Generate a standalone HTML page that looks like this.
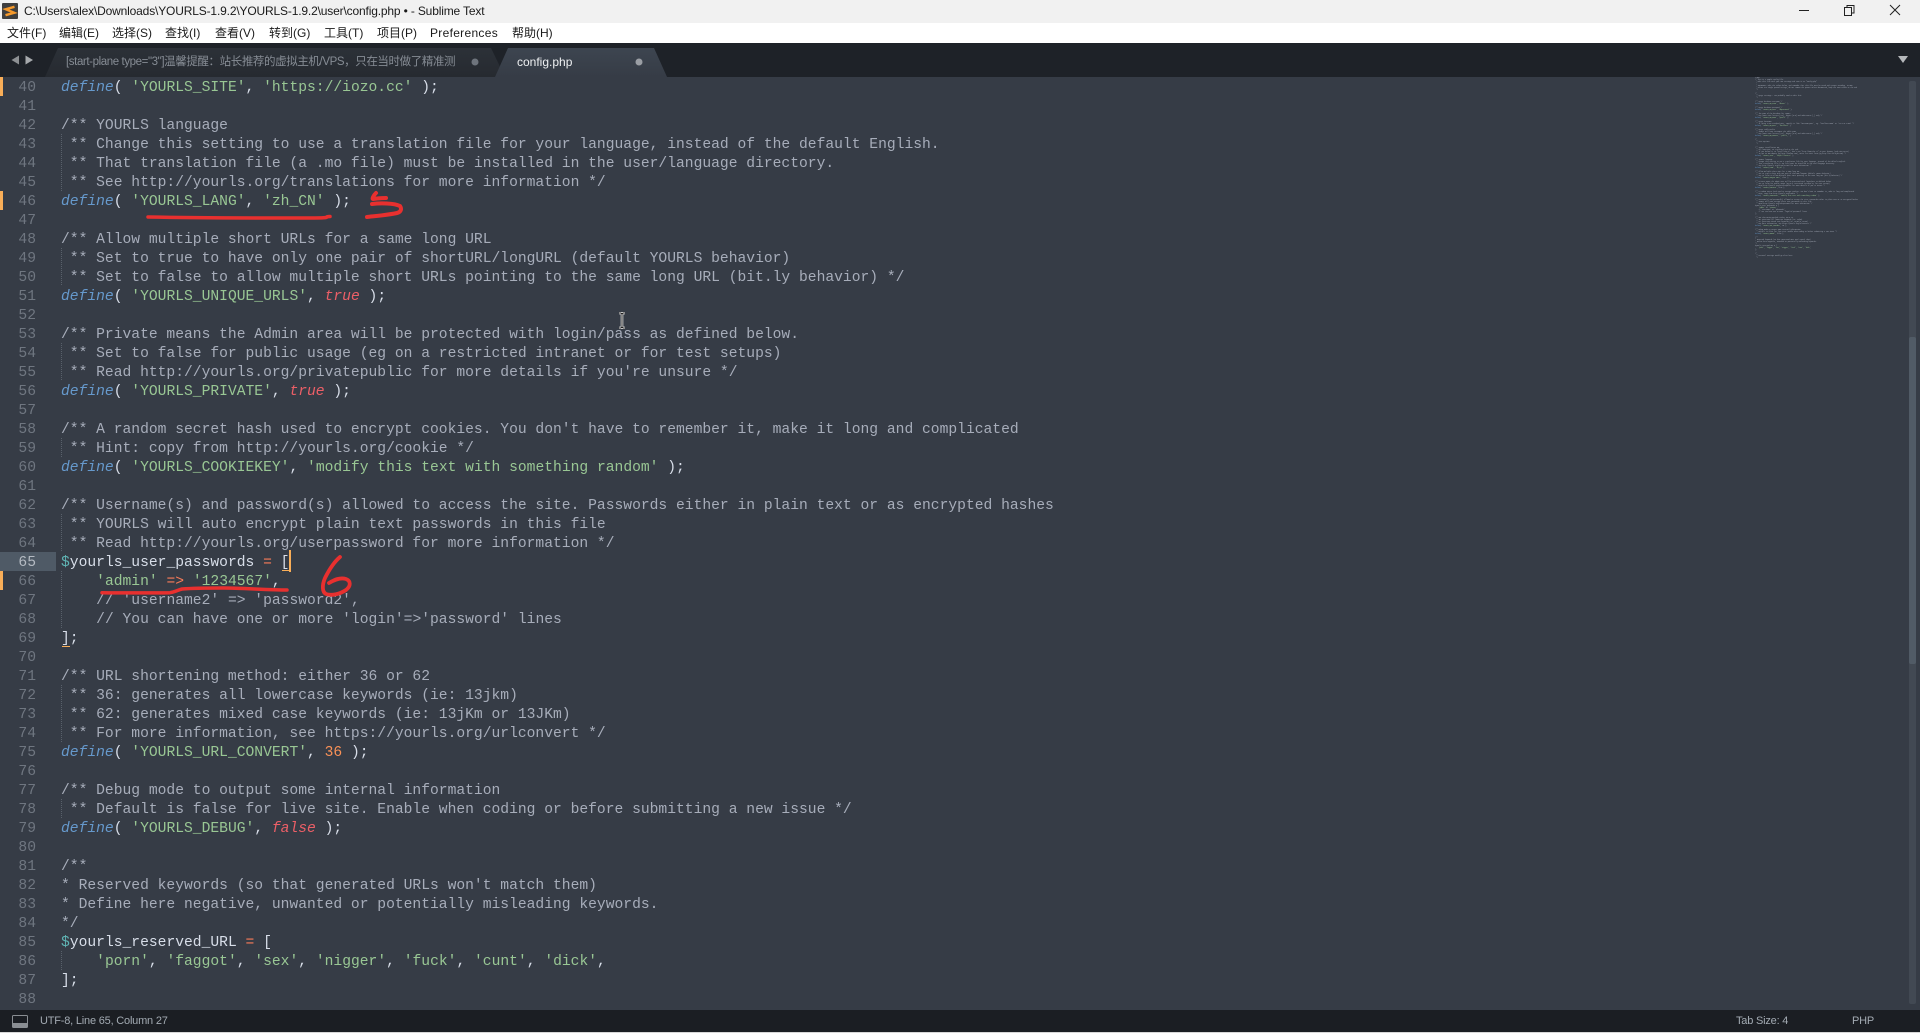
<!DOCTYPE html>
<html lang="en"><head><meta charset="utf-8"><title>config.php - Sublime Text</title>
<style>
html,body{margin:0;padding:0;width:1920px;height:1033px;overflow:hidden;background:#363c46}
body{position:relative;font-family:"Liberation Sans","Noto Sans CJK SC",sans-serif}
.abs,.m{position:absolute}
#title{left:0;top:0;width:1920px;height:23px;background:#f1f1f1}
#ttext{left:24px;top:4px;font-size:12px;line-height:15px;color:#1a1a1a;white-space:nowrap;letter-spacing:-.16px}
#menu{left:0;top:23px;width:1920px;height:20px;background:#fff}
.m{top:25px;font-size:12px;line-height:16px;color:#1a1a1a;white-space:nowrap}
#tabs{left:0;top:43px;width:1920px;height:34px;background:#1e2228}
#editor{left:0;top:77px;width:1920px;height:933px;background:#363c46;overflow:hidden}
#nums,#code{position:absolute;top:2px;font-family:"Liberation Mono",monospace;font-size:14.65px;line-height:19px;white-space:pre;margin:0}
#nums{left:0;width:36px;text-align:right;color:#6f7680}
#code{left:61px;color:#d8dee9}
#code i{color:#6699cc;font-style:italic}
#code i.t{color:#ec5f67}
#code b{font-weight:normal;color:#99c794}
#code u{text-decoration:none;color:#a7adba}
#code em{font-style:normal;color:#f99157}
#code s{text-decoration:none;color:#f97b58}
#code span{color:#5fb4b4}
.g{position:absolute;left:61px;width:1px;background:repeating-linear-gradient(#59616b 0 1px,transparent 1px 2px)}
.mk{position:absolute;left:0;width:3px;height:19px;background:#f9ae58}
#mini{position:absolute;left:1755px;top:1px;margin:0;font-family:"Liberation Mono",monospace;font-size:1.53px;line-height:2px;white-space:pre;color:#a7adba}
#mini i{color:#6699cc;font-style:normal}#mini b{color:#99c794;font-weight:normal}
#status{left:0;top:1010px;width:1920px;height:22px;background:#1b1e23}
#bottom{left:0;top:1032px;width:1920px;height:1px;background:#d8d8d8}
.st{position:absolute;top:3px;font-size:11px;line-height:16px;letter-spacing:-.2px;color:#a3abb3;white-space:nowrap}
</style></head><body>
<div class="abs" id="title"></div>
<svg class="abs" style="left:2px;top:3px" width="16" height="16" viewBox="0 0 16 16"><rect width="16" height="16" rx="1" fill="#3f3f3f"/><path d="M12.500 3.800 3.800 6.200 12.200 9.800 3.500 12.200" fill="none" stroke="#f79a2b" stroke-width="2.400" stroke-linejoin="miter"/></svg>
<div class="abs" id="ttext">C:\Users\alex\Downloads\YOURLS-1.9.2\YOURLS-1.9.2\user\config.php • - Sublime Text</div>
<svg class="abs" style="left:1790px;top:0" width="120" height="23" fill="none" stroke="#222" stroke-width="1"><path d="M9 10.500h10"/><path d="M54.500 7.500h7v8h-7zM57 7.500v-2h7v7.500h-2.500"/><path d="M100 5l10 10M110 5l-10 10"/></svg>
<div class="abs" id="menu"></div>
<div class="m" style="left:7px">文件(F)</div><div class="m" style="left:59px">编辑(E)</div><div class="m" style="left:112px">选择(S)</div><div class="m" style="left:165px">查找(I)</div><div class="m" style="left:215px">查看(V)</div><div class="m" style="left:269px">转到(G)</div><div class="m" style="left:324px">工具(T)</div><div class="m" style="left:377px">项目(P)</div><div class="m" style="left:430px;letter-spacing:.3px">Preferences</div><div class="m" style="left:512px">帮助(H)</div>
<div class="abs" id="tabs"></div>
<svg class="abs" style="left:0;top:42px" width="1920" height="35">
<defs><linearGradient id="ga" x1="0" y1="0" x2="0" y2="1"><stop offset="0" stop-color="#3d4550"/><stop offset="1" stop-color="#363c46"/></linearGradient><linearGradient id="gb" x1="0" y1="0" x2="0" y2="1"><stop offset="0" stop-color="#2c3138"/><stop offset="1" stop-color="#262a30"/></linearGradient></defs>
<path d="M45 35 58 6H491L505 35Z" fill="url(#gb)"/>
<path d="M495 35 508 6H654L667 35Z" fill="url(#ga)"/>
<path d="M11.500 18l7.500-4.500v9z" fill="#8d9093"/><path d="M33 18l-7.500-4.500v9z" fill="#a6a9ac"/>
<circle cx="475" cy="20" r="3.500" fill="#6e747c"/><circle cx="639" cy="20" r="3.500" fill="#9a9ea4"/>
<path d="M1898 14h10l-5 7z" fill="#b5b8bb"/>
</svg>
<div class="abs" style="left:66px;top:54px;width:394px;overflow:hidden;font-size:11.500px;line-height:16px;letter-spacing:-.4px;color:#868c94;white-space:nowrap">[start-plane type="3"]温馨提醒：站长推荐的虚拟主机/VPS，只在当时做了精准测</div>
<div class="abs" style="left:517px;top:54px;font-size:12px;line-height:16px;color:#eef0f2;white-space:nowrap">config.php</div>
<div class="abs" id="editor">
<div style="position:absolute;left:0;top:475px;width:56px;height:19px;background:#4f5a66"></div>
<div class="mk" style="top:0"></div><div class="mk" style="top:114px"></div><div class="mk" style="top:494px"></div>
<div class="g" style="top:57px;height:57px"></div><div class="g" style="top:171px;height:38px"></div><div class="g" style="top:266px;height:38px"></div><div class="g" style="top:361px;height:19px"></div><div class="g" style="top:437px;height:38px"></div><div class="g" style="top:494px;height:57px"></div><div class="g" style="top:608px;height:57px"></div><div class="g" style="top:722px;height:19px"></div><div class="g" style="top:874px;height:19px"></div>
<pre id="nums">40
41
42
43
44
45
46
47
48
49
50
51
52
53
54
55
56
57
58
59
60
61
62
63
64
<span style="color:#b4bac2">65</span>
66
67
68
69
70
71
72
73
74
75
76
77
78
79
80
81
82
83
84
85
86
87
88</pre>
<pre id="code"><i>define</i>( <b>'YOURLS_SITE'</b>, <b>'https://iozo.cc'</b> );

<u>/** YOURLS language
 ** Change this setting to use a translation file for your language, instead of the default English.
 ** That translation file (a .mo file) must be installed in the user/language directory.
 ** See http://yourls.org/translations for more information */</u>
<i>define</i>( <b>'YOURLS_LANG'</b>, <b>'zh_CN'</b> );

<u>/** Allow multiple short URLs for a same long URL
 ** Set to true to have only one pair of shortURL/longURL (default YOURLS behavior)
 ** Set to false to allow multiple short URLs pointing to the same long URL (bit.ly behavior) */</u>
<i>define</i>( <b>'YOURLS_UNIQUE_URLS'</b>, <i class="t">true</i> );

<u>/** Private means the Admin area will be protected with login/pass as defined below.
 ** Set to false for public usage (eg on a restricted intranet or for test setups)
 ** Read http://yourls.org/privatepublic for more details if you're unsure */</u>
<i>define</i>( <b>'YOURLS_PRIVATE'</b>, <i class="t">true</i> );

<u>/** A random secret hash used to encrypt cookies. You don't have to remember it, make it long and complicated
 ** Hint: copy from http://yourls.org/cookie */</u>
<i>define</i>( <b>'YOURLS_COOKIEKEY'</b>, <b>'modify this text with something random'</b> );

<u>/** Username(s) and password(s) allowed to access the site. Passwords either in plain text or as encrypted hashes
 ** YOURLS will auto encrypt plain text passwords in this file
 ** Read http://yourls.org/userpassword for more information */</u>
<span>$</span>yourls_user_passwords <s>=</s> [
    <b>'admin'</b> <s>=&gt;</s> <b>'1234567'</b>,
    <u>// 'username2' =&gt; 'password2',</u>
    <u>// You can have one or more 'login'=&gt;'password' lines</u>
];

<u>/** URL shortening method: either 36 or 62
 ** 36: generates all lowercase keywords (ie: 13jkm)
 ** 62: generates mixed case keywords (ie: 13jKm or 13JKm)
 ** For more information, see https://yourls.org/urlconvert */</u>
<i>define</i>( <b>'YOURLS_URL_CONVERT'</b>, <em>36</em> );

<u>/** Debug mode to output some internal information
 ** Default is false for live site. Enable when coding or before submitting a new issue */</u>
<i>define</i>( <b>'YOURLS_DEBUG'</b>, <i class="t">false</i> );

<u>/**
* Reserved keywords (so that generated URLs won't match them)
* Define here negative, unwanted or potentially misleading keywords.
*/</u>
<span>$</span>yourls_reserved_URL <s>=</s> [
    <b>'porn'</b>, <b>'faggot'</b>, <b>'sex'</b>, <b>'nigger'</b>, <b>'fuck'</b>, <b>'cunt'</b>, <b>'dick'</b>,
];
</pre>
<div style="position:absolute;left:289px;top:473px;width:2px;height:22px;background:#f9ae58"></div>
<div style="position:absolute;left:282px;top:493px;width:7px;height:1px;background:#f9ae58"></div>
<div style="position:absolute;left:62px;top:569px;width:8px;height:1px;background:#f9ae58"></div>
<pre id="mini" aria-hidden="true">&lt;?php
/* This is a sample config file.
 * Edit this file with your own settings and save it as "config.php"
 *
 * IMPORTANT: edit the values below, and remember that this file must be saved with proper encoding, no BOM
 * Values are single quoted strings, do not remove the quotes unless documented, keep the semi colons at the end
 */

/*
 ** MySQL settings - You probably need to edit this
 */

/** MySQL database username */
<i>define</i>( <b>'YOURLS_DB_USER'</b>, <b>'dbuser'</b> );

/** MySQL database password */
<i>define</i>( <b>'YOURLS_DB_PASS'</b>, <b>'dbpassword'</b> );

/** The name of the database for YOURLS
 ** Use lower case letters [a-z], digits [0-9] and underscores [_] only */
<i>define</i>( <b>'YOURLS_DB_NAME'</b>, <b>'yourls'</b> );

/** MySQL hostname.
 ** If using a non standard port, specify it like 'hostname:port', eg. 'localhost:9999' or '127.0.0.1:666' */
<i>define</i>( <b>'YOURLS_DB_HOST'</b>, <b>'localhost'</b> );

/** MySQL table prefix
 ** YOURLS will auto increment the table name
 ** Use lower case letters [a-z], digits [0-9] and underscores [_] only */
<i>define</i>( <b>'YOURLS_DB_PREFIX'</b>, <b>'yourls_'</b> );

/*
 ** Site options
 */

/** YOURLS installation URL
 ** All lowercase, no trailing slash at the end.
 ** If you define it to "http://sho.rt", don't use "http://www.sho.rt" in your browser (and vice-versa)
 ** To use an IDN domain (eg http://heehee.com), write its ascii form (eg http://xn--hh-bjab.com) */
<i>define</i>( <b>'YOURLS_SITE', 'https://iozo.cc'</b> );

/** YOURLS language
 ** Change this setting to use a translation file for your language, instead of the default English.
 ** That translation file (a .mo file) must be installed in the user/language directory.
 ** See http://yourls.org/translations for more information */
<i>define</i>( <b>'YOURLS_LANG', 'zh_CN'</b> );

/** Allow multiple short URLs for a same long URL
 ** Set to true to have only one pair of shortURL/longURL (default YOURLS behavior)
 ** Set to false to allow multiple short URLs pointing to the same long URL (bit.ly behavior) */
<i>define</i>( <b>'YOURLS_UNIQUE_URLS'</b>, true );

/** Private means the Admin area will be protected with login/pass as defined below.
 ** Set to false for public usage (eg on a restricted intranet or for test setups)
 ** Read http://yourls.org/privatepublic for more details if you're unsure */
<i>define</i>( <b>'YOURLS_PRIVATE'</b>, true );

/** A random secret hash used to encrypt cookies. You don't have to remember it, make it long and complicated
 ** Hint: copy from http://yourls.org/cookie */
<i>define</i>( <b>'YOURLS_COOKIEKEY', 'modify this text with something random'</b> );

/** Username(s) and password(s) allowed to access the site. Passwords either in plain text or as encrypted hashes
 ** YOURLS will auto encrypt plain text passwords in this file
 ** Read http://yourls.org/userpassword for more information */
$yourls_user_passwords = [
    <b>'admin'</b> =&gt; <b>'1234567'</b>,
    // 'username2' =&gt; 'password2',
    // You can have one or more 'login'=&gt;'password' lines
];

/** URL shortening method: either 36 or 62
 ** 36: generates all lowercase keywords (ie: 13jkm)
 ** 62: generates mixed case keywords (ie: 13jKm or 13JKm)
 ** For more information, see https://yourls.org/urlconvert */
<i>define</i>( <b>'YOURLS_URL_CONVERT'</b>, 36 );

/** Debug mode to output some internal information
 ** Default is false for live site. Enable when coding or before submitting a new issue */
<i>define</i>( <b>'YOURLS_DEBUG'</b>, false );

/**
* Reserved keywords (so that generated URLs won't match them)
* Define here negative, unwanted or potentially misleading keywords.
*/
$yourls_reserved_URL = [
    <b>'porn', 'faggot', 'sex', 'nigger', 'fuck', 'cunt', 'dick'</b>,
];

/*
 ** Personal settings would go after here.
 */</pre>
<div style="position:absolute;left:1909px;top:4px;width:7px;height:923px;background:#424953;border-radius:2px"></div>
<div style="position:absolute;left:1909px;top:260px;width:7px;height:327px;background:#515b66;border-radius:2px"></div>
</div>
<svg class="abs" style="left:0;top:0" width="1920" height="1033" fill="none" stroke="#e8302f" stroke-linecap="round" stroke-linejoin="round">
<path stroke-width="3.500" d="M148 217C200 218 260 218 300 218S320 217 330 216.500"/>
<path stroke-width="4" d="M376 193C373 196 372 199 373 199C378 198 383 198 386 198M372 204C380 203 394 203 400 206C402 209 401 212 397 213C388 215 376 216 367 217"/>
<path stroke-width="3.500" d="M102 592.700C130 593 155 593 170 592.700C175 592 178 590 182 589C195 588 210 588 223 588C240 588 270 590 287 590"/>
<path stroke-width="3.800" d="M340 557C334 562 329 570 325 578C322 585 322 592 326 594C332 596 340 594 346 590C351 586 351 581 346 579C340 577 334 580 329 583"/>
</svg>
<svg class="abs" style="left:617px;top:312px" width="10" height="17" fill="none"><path d="M2 1h2l1 1 1-1h2M5 2v13M2 16h2l1-1 1 1h2" stroke="#fff" stroke-width="2.500"/><path d="M2 1h2l1 1 1-1h2M5 2v13M2 16h2l1-1 1 1h2" stroke="#111" stroke-width="1"/></svg>
<div class="abs" id="status">
<svg style="position:absolute;left:12px;top:5px" width="16" height="13"><rect x=".5" y=".5" width="15" height="12" rx="1" fill="none" stroke="#8a8e93"/><rect x="1" y="8" width="14" height="4" fill="#8a8e93"/></svg>
<div class="st" style="left:40px">UTF-8, Line 65, Column 27</div>
<div class="st" style="left:1736px">Tab Size: 4</div>
<div class="st" style="left:1852px">PHP</div>
</div>
<div class="abs" id="bottom"></div>
</body></html>
